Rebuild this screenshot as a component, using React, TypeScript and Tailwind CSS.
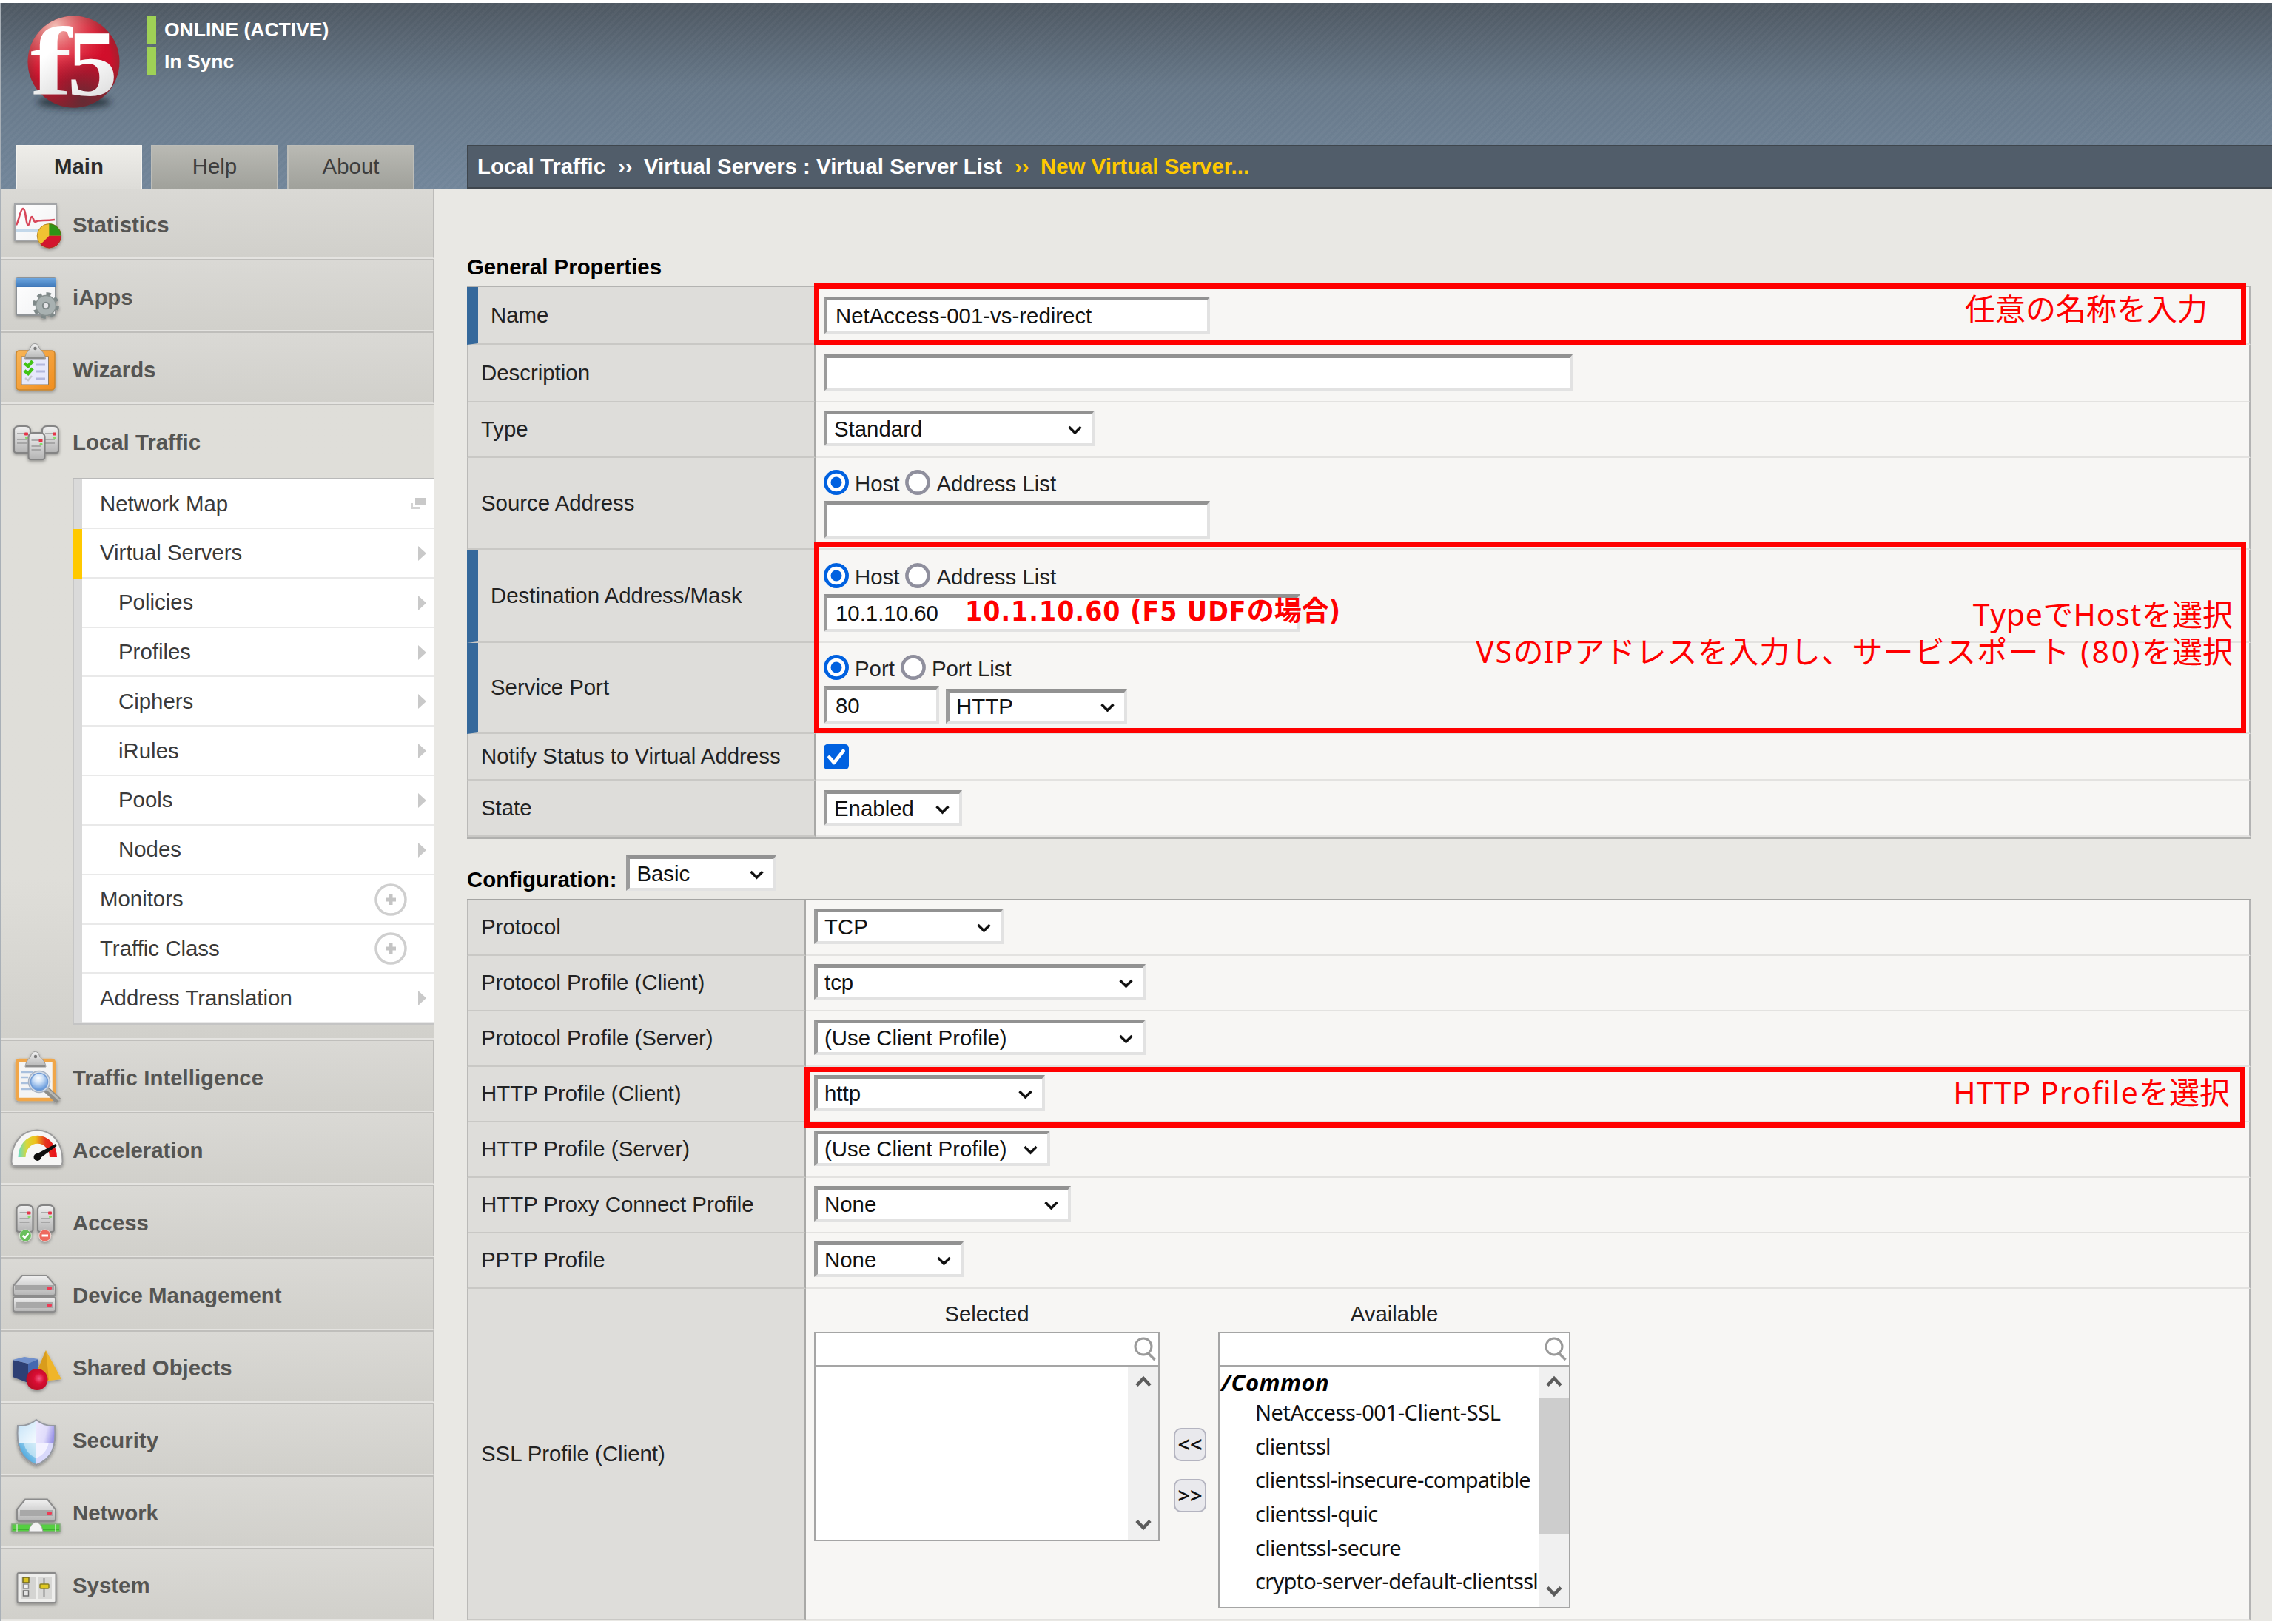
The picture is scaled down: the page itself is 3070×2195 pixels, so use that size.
import React from "react";

const metal = "url(#metal)";

function SharedDefs() {
  return (
    <svg className="absolute h-0 w-0" aria-hidden="true">
      <defs>
        <linearGradient id="metal" x1="0" y1="0" x2="0" y2="1">
          <stop offset="0" stopColor="#f1f1f1" />
          <stop offset="1" stopColor="#b4b4b4" />
        </linearGradient>
        <linearGradient id="paper" x1="0" y1="0" x2="1" y2="1">
          <stop offset="0" stopColor="#ffffff" />
          <stop offset="1" stopColor="#f0f1f3" />
        </linearGradient>
        <linearGradient id="orange" x1="0" y1="0" x2="1" y2="1">
          <stop offset="0" stopColor="#f7b558" />
          <stop offset="1" stopColor="#f18d1e" />
        </linearGradient>
        <linearGradient id="blueBar" x1="0" y1="0" x2="0" y2="1">
          <stop offset="0" stopColor="#6ba6e0" />
          <stop offset="1" stopColor="#3f77b8" />
        </linearGradient>
        <linearGradient id="gauge" x1="0" y1="0" x2="1" y2="0">
          <stop offset="0" stopColor="#5fdccb" />
          <stop offset="0.22" stopColor="#d8d83a" />
          <stop offset="0.45" stopColor="#eec01c" />
          <stop offset="0.7" stopColor="#e5341a" />
          <stop offset="1" stopColor="#ea0f1c" />
        </linearGradient>
        <radialGradient id="redBall" cx="0.6" cy="0.45" r="0.6">
          <stop offset="0" stopColor="#f35a86" />
          <stop offset="0.4" stopColor="#d90f33" />
          <stop offset="1" stopColor="#b80a26" />
        </radialGradient>
        <linearGradient id="shieldA" x1="0" y1="0" x2="1" y2="1">
          <stop offset="0" stopColor="#bfe0f7" />
          <stop offset="1" stopColor="#f6fbff" />
        </linearGradient>
        <linearGradient id="shieldB" x1="0" y1="0" x2="1" y2="0.3">
          <stop offset="0" stopColor="#eeeaff" />
          <stop offset="0.6" stopColor="#e0dcfb" />
          <stop offset="1" stopColor="#9a94e8" />
        </linearGradient>
        <linearGradient id="shieldC" x1="0" y1="1" x2="1" y2="0">
          <stop offset="0" stopColor="#1f84c9" />
          <stop offset="0.45" stopColor="#58aee0" />
          <stop offset="1" stopColor="#c8e6f7" />
        </linearGradient>
        <radialGradient id="lens" cx="0.45" cy="0.3" r="0.75">
          <stop offset="0" stopColor="#ffffff" />
          <stop offset="0.35" stopColor="#cfe2f8" />
          <stop offset="1" stopColor="#4f8ad6" />
        </radialGradient>
        <filter id="drop" x="-20%" y="-20%" width="140%" height="150%">
          <feDropShadow dx="0" dy="2" stdDeviation="2" floodColor="#000" floodOpacity="0.35" />
        </filter>
      </defs>
    </svg>
  );
}

function Icon({ children }: { children: React.ReactNode }) {
  return (
    <svg width="80" height="80" viewBox="0 0 80 80" className="shrink-0 overflow-visible">
      <g filter="url(#drop)">{children}</g>
    </svg>
  );
}

function StatisticsIcon() {
  return (
    <Icon>
      <rect x="12" y="15" width="56" height="49" fill="url(#paper)" stroke="#a3a5a8" strokeWidth="2" />
      <rect x="14" y="48" width="52" height="4" fill="#c3d8ea" />
      <path d="M14 43 C17 40 19 22 23 21 C27 21 27 43 30 43 C33 43 32 32 35 32 C37 32 37 39 40 39 C44 36 50 38 66 36" fill="none" stroke="#d8475a" strokeWidth="2.6" />
      <circle cx="58.4" cy="57.8" r="16.5" fill="#f1c232" />
      <path d="M58.4 57.8 V41.3 A16.5 16.5 0 0 1 74.9 57.8 Z" fill="#2f9416" />
      <path d="M58.4 57.8 H74.9 A16.5 16.5 0 0 1 46.7 69.5 Z" fill="#d3182e" />
      <circle cx="58.4" cy="57.8" r="16.2" fill="none" stroke="#7a4a20" strokeOpacity="0.5" strokeWidth="1" />
    </Icon>
  );
}

function IAppsIcon() {
  return (
    <Icon>
      <rect x="14" y="17" width="53" height="50" rx="2" fill="url(#paper)" stroke="#8f9396" strokeWidth="2" />
      <rect x="14" y="17" width="53" height="12" fill="url(#blueBar)" />
      <circle cx="54" cy="54" r="14.5" fill="none" stroke="#7f8989" strokeWidth="7" strokeDasharray="5.7 5.69" />
      <circle cx="54" cy="54" r="13.5" fill="#a8b1b1" stroke="#87908f" strokeWidth="1.5" />
      <circle cx="54" cy="54" r="4.2" fill="#e5e5e8" stroke="#7d8787" strokeWidth="2" />
    </Icon>
  );
}

function Clip({ x = 40 }: { x?: number }) {
  return (
    <g transform={`translate(${x - 40} 0)`}>
      <path d="M26 28 C27 18 33 17 34 12 C35 6 44 6 45 12 C46 17 53 18 54 28 Z" fill={metal} stroke="#9a9a9a" strokeWidth="1" />
      <rect x="27" y="25" width="26" height="3" fill="#8c8c8c" />
      <circle cx="40" cy="14" r="2.2" fill="#777" />
    </g>
  );
}

function WizardsIcon() {
  return (
    <Icon>
      <rect x="14" y="17" width="52" height="53" rx="4" fill="url(#orange)" stroke="#c9852c" strokeWidth="1.5" />
      <rect x="21" y="25" width="36.500" height="38" fill="#e6e8fb" stroke="#8f7a5c" strokeWidth="1" />
      <path d="M25 34 L30 38 L36 31" fill="none" stroke="#43c414" strokeWidth="4.500" />
      <path d="M25 44 L30 48 L36 41" fill="none" stroke="#43c414" strokeWidth="4.500" />
      <path d="M26 54 L30 57 L35 51" fill="none" stroke="#c5c6cf" strokeWidth="2.500" />
      <path d="M40 36 H53 M40 45 H53 M40 55 H53" stroke="#b3b8dd" strokeWidth="3" />
      <Clip x={39.5} />
    </Icon>
  );
}

function Tower({ x, y, h = 37 }: { x: number; y: number; h?: number }) {
  return (
    <g transform={`translate(${x} ${y})`}>
      <path d={`M1 ${h - 3} V6 Q2 1 8 1 H16 Q22 1 23 6 V${h - 3} Q23 ${h} 20 ${h} H4 Q1 ${h} 1 ${h - 3} Z`} fill={metal} stroke="#848484" strokeWidth="2.2" />
      <path d={`M5 11 H16 M5 19 H18 M5 24 H18`} stroke="#9b9b9b" strokeWidth="1.600" />
      <rect x="15" y="9.500" width="5" height="4" rx="1" fill="#e5344a" />
      <rect x="16" y="15" width="4" height="3" rx="1" fill="#86dc6a" />
    </g>
  );
}

function LocalTrafficIcon() {
  return (
    <Icon>
      <Tower x={10} y={20} />
      <Tower x={48} y={20} />
      <Tower x={29.5} y={29} />
    </Icon>
  );
}

function TrafficIntelligenceIcon() {
  return (
    <Icon>
      <rect x="15" y="19" width="50" height="53" rx="3" fill="#f4f4f4" stroke="#f0a648" strokeWidth="4.500" />
      <path d="M21 35 H36 M21 42 H30 M21 50 H30 M21 58 H34" stroke="#a9c0dd" strokeWidth="2.500" />
      <Clip />
      <path d="M54 58 L71 74" stroke="#8e8e8a" strokeWidth="9" />
      <path d="M55 57 L72 73" stroke="#b9b9b5" strokeWidth="3" />
      <circle cx="45" cy="48" r="14.500" fill="#d3dce8" stroke="#a6b2c3" strokeWidth="1.500" />
      <circle cx="45" cy="48" r="11.500" fill="url(#lens)" stroke="#6f9bd6" strokeWidth="1.500" />
    </Icon>
  );
}

function AccelerationIcon() {
  return (
    <Icon>
      <path d="M7.500 58 C7 32 22 15.500 42 15.500 C62 15.500 77 32 76.500 58 Q76.500 64 71 64 H13 Q7.500 64 7.500 58 Z" fill="#f6f6f5" stroke="#9c9c9c" strokeWidth="2" />
      <path d="M16.500 52 A26 29 0 0 1 69 52 H59 A16 18 0 0 0 26.500 52 Z" fill="url(#gauge)" />
      <path d="M39 49 L67 34 L68.500 37 L44 55 Z" fill="#111" />
      <circle cx="42.500" cy="52" r="5" fill="#111" />
    </Icon>
  );
}

function AccessIcon() {
  return (
    <Icon>
      <Tower x={13.5} y={18} />
      <Tower x={42} y={18} />
      <circle cx="26.400" cy="60" r="8" fill="#6abf5d" stroke="#d6e6d2" strokeWidth="1" />
      <path d="M22.500 60 L25.500 63 L30.500 57" fill="none" stroke="#fff" strokeWidth="2.500" />
      <circle cx="52.700" cy="60" r="8" fill="#ee6a5e" stroke="#efd6d2" strokeWidth="1" />
      <path d="M48.500 60 H57" stroke="#fff" strokeWidth="3" />
    </Icon>
  );
}

function DeviceIcon() {
  return (
    <Icon>
      <path d="M10 30 L22 16 H55 L67 30 V40 Q67 43 64 43 H13 Q10 43 10 40 Z" fill={metal} stroke="#8c8c8c" strokeWidth="2" />
      <path d="M12 29 H65 V36 H12 Z" fill="#a5a5a5" />
      <rect x="10" y="45" width="57" height="20" rx="3" fill={metal} stroke="#8c8c8c" strokeWidth="2" />
      <path d="M14 52 H63 V60 H14 Z" fill="#a8a8a8" />
      <rect x="55" y="31" width="7" height="4" rx="1.500" fill="#ee3a55" />
      <rect x="55" y="54" width="7" height="4" rx="1.500" fill="#ee3a55" />
    </Icon>
  );
}

function SharedObjectsIcon() {
  return (
    <Icon>
      <path d="M9 31 L30 36 V62 L9 54 Z" fill="#2d3f74" />
      <path d="M9 31 L25 27 L44 30 L30 36 Z" fill="#6f8fcb" />
      <path d="M30 36 L44 30 V56 L30 62 Z" fill="#4468b0" />
      <path d="M54 18 L75 57 L50 60 Z" fill="#efb52c" />
      <path d="M54 18 L42 46 L50 60 L58 58 Z" fill="#d99c1c" />
      <circle cx="42" cy="57.500" r="14.500" fill="url(#redBall)" />
    </Icon>
  );
}

function SecurityIcon() {
  const shield = "M41 14 Q52 23 66 22 C68 48 64 66 41 75 C18 66 14 48 16 22 Q30 23 41 14 Z";
  return (
    <Icon>
      <clipPath id="shieldClip">
        <path d={shield} />
      </clipPath>
      <g clipPath="url(#shieldClip)">
        <rect x="14" y="13" width="27" height="32" fill="url(#shieldA)" />
        <rect x="41" y="13" width="27" height="32" fill="url(#shieldB)" />
        <rect x="14" y="45" width="27" height="32" fill="url(#shieldC)" />
        <rect x="41" y="45" width="27" height="32" fill="#d9d9fb" />
        <path d="M41 45 H58 Q55 60 41 66 Z" fill="#f3f2ff" />
        <path d="M41 45 H24 Q27 60 41 66 Z" fill="#ddf1fa" fillOpacity="0.6" />
      </g>
      <path d={shield} fill="none" stroke="#9599a0" strokeWidth="2" />
    </Icon>
  );
}

function NetworkIcon() {
  return (
    <Icon>
      <path d="M15 37 L26 23.500 H56 L67 37 V50 Q67 53 64 53 H18 Q15 53 15 50 Z" fill={metal} stroke="#8c8c8c" strokeWidth="2" />
      <path d="M19 38 H63 V46 H19 Z" fill="#a8a8a8" />
      <rect x="55" y="40" width="7" height="4" rx="1.500" fill="#ee3a55" />
      <rect x="8" y="57" width="65" height="10" fill="#55cf42" stroke="#7fa878" strokeWidth="1.500" />
      <path d="M9 64 H72" stroke="#2f8f22" strokeWidth="2" strokeOpacity="0.5" />
      <path d="M15 57 V67 M67 57 V67" stroke="#cfe3ca" strokeWidth="1.500" />
      <path d="M31 67 Q33 55 41 55 Q48 55 50 67 Z" fill="#f3f3f3" stroke="#a0a0a0" strokeWidth="1" />
    </Icon>
  );
}

function SystemIcon() {
  return (
    <Icon>
      <rect x="15.500" y="25" width="52" height="40" rx="2" fill="#eeeeec" stroke="#8a8a8a" strokeWidth="2" />
      <rect x="21" y="30" width="20" height="30" fill="#d4d4d2" />
      <rect x="44" y="30" width="18" height="30" fill="#d8d8d6" />
      <rect x="23" y="31" width="8" height="7" fill="#d9c224" stroke="#6f6722" strokeWidth="1.500" />
      <rect x="23.500" y="40" width="7" height="6" fill="#f0f0f0" stroke="#909090" strokeWidth="1.500" />
      <rect x="23.500" y="49" width="7" height="7" fill="#e4e4e4" stroke="#707070" strokeWidth="1.500" />
      <path d="M51.500 32 V58" stroke="#8a8a8a" strokeWidth="2" />
      <rect x="46" y="40" width="12" height="6" rx="1" fill="#e0c922" stroke="#8b8122" strokeWidth="1.500" />
    </Icon>
  );
}

function Logo() {
  return (
    <svg width="140" height="140" viewBox="30 16 140 140" className="overflow-visible">
      <defs>
        <radialGradient id="ball" cx="0.5" cy="0.5" r="0.5">
          <stop offset="0" stopColor="#dc0a2c" />
          <stop offset="0.8" stopColor="#cf0f2b" />
          <stop offset="1" stopColor="#a51f2e" />
        </radialGradient>
        <radialGradient id="shine" cx="0.3" cy="0.12" r="0.6">
          <stop offset="0" stopColor="#f7cbc0" stopOpacity="0.95" />
          <stop offset="1" stopColor="#e84b50" stopOpacity="0" />
        </radialGradient>
        <radialGradient id="shade" cx="0.6" cy="0.9" r="0.5">
          <stop offset="0" stopColor="#4a3236" stopOpacity="0.8" />
          <stop offset="1" stopColor="#4a2a2e" stopOpacity="0" />
        </radialGradient>
        <linearGradient id="glyph" x1="0" y1="0" x2="0.3" y2="1">
          <stop offset="0.5" stopColor="#ffffff" />
          <stop offset="1" stopColor="#dcdcdc" />
        </linearGradient>
        <filter id="soft" x="-30%" y="-80%" width="160%" height="260%">
          <feGaussianBlur stdDeviation="5" />
        </filter>
      </defs>
      <ellipse cx="100" cy="138" rx="50" ry="9" fill="#1d252e" opacity="0.75" filter="url(#soft)" />
      <circle cx="99.500" cy="83.500" r="62" fill="url(#ball)" />
      <circle cx="99.500" cy="83.500" r="62" fill="url(#shine)" />
      <circle cx="99.500" cy="83.500" r="62" fill="url(#shade)" />
      <g fontFamily="'Liberation Serif', serif" fontWeight="700" fill="url(#glyph)">
        <text transform="translate(41 128) scale(1.28 1)" fontSize="131">f</text>
        <text transform="translate(91 128.500) scale(1.06 1)" fontSize="128">5</text>
      </g>
    </svg>
  );
}

function Tab({ label, active }: { label: string; active?: boolean }) {
  return (
    <div
      className={
        active
          ? "flex h-[59px] w-[171px] items-center justify-center border-x-2 border-t-2 border-[#f3f2ee] bg-linear-to-b from-[#eeede9] to-[#dddcd8] pb-[3px] font-bold text-[#2b2b2b]"
          : "flex h-[59px] w-[172px] items-center justify-center border-x-2 border-t-2 border-[#bdbdb8] bg-linear-to-b from-[#b9b9b3] to-[#a0a19b] pb-[3px] text-[#3d3d3d]"
      }
    >
      {label}
    </div>
  );
}

function NavRow({ label, icon, first, open }: { label: string; icon: React.ReactNode; first?: boolean; open?: boolean }) {
  return (
    <div
      className={
        open
          ? "flex h-[101px] items-start"
          : first
            ? "flex h-[95px] items-end border-r-2 border-b-2 border-r-[#bcbbb9] border-b-[#e4e3e0] bg-linear-to-b from-[#dad9d5] to-[#d1d0cb]"
            : "flex h-[98.100px] items-start border-t-2 border-r-2 border-b-2 border-t-[#bfbebb] border-r-[#bcbbb9] border-b-[#e4e3e0] bg-linear-to-b from-[#dad9d5] to-[#d1d0cb]"
      }
    >
      <div className="flex h-[94px] items-center gap-[10px] pl-2">
        {icon}
        <span className="pt-[5px] font-bold text-[#555553]">{label}</span>
      </div>
    </div>
  );
}

type SubKind = "arrow" | "plus" | "window";

function SubRow({ label, indent, kind, current }: { label: string; indent?: boolean; kind: SubKind; current?: boolean }) {
  return (
    <div className="flex h-[66.820px]">
      <div className={current ? "w-[13px] bg-[#ffc900]" : "w-[13px] border-l-2 border-[#c6c6c6] bg-[#dadada]"} />
      <div className="flex flex-1 items-center justify-between border-b-2 border-[#e9e9e9] bg-white pr-[11px]">
        <span className={indent ? "pl-[49px]" : "pl-[24px]"}>{label}</span>
        {kind === "arrow" && (
          <svg width="11" height="20" viewBox="0 0 11 20" className="mt-px">
            <path d="M0 0 L11 10 L0 20 Z" fill="#c9c9c9" />
          </svg>
        )}
        {kind === "plus" && (
          <svg width="44" height="44" viewBox="0 0 44 44" className="mt-px mr-[26px]">
            <circle cx="22" cy="22" r="20" fill="none" stroke="#cfcfcf" strokeWidth="3.500" />
            <path d="M22 15 V29 M15 22 H29" stroke="#c4c4c4" strokeWidth="5" />
          </svg>
        )}
        {kind === "window" && (
          <svg width="21" height="18" viewBox="0 0 21 18" className="mt-px">
            <path d="M1.500 8 V14.500 H13" fill="none" stroke="#d3d3d3" strokeWidth="3" />
            <rect x="6" y="1" width="15" height="10" fill="#c9c9c9" />
          </svg>
        )}
      </div>
    </div>
  );
}

const field =
  "flex items-center border-t-[5px] border-l-[5px] border-r-[4px] border-b-[4px] border-t-[#929292] border-l-[#9b9b9b] border-r-[#e2e2e2] border-b-[#e2e2e2] bg-white text-[#111]";

function Field({ size, value }: { size: string; value?: string }) {
  return <div className={`${field} pl-[11px] ${size}`}>{value}</div>;
}

function Select({ size, value }: { size: string; value: string }) {
  return (
    <div className={`${field} justify-between pl-[9px] pr-[13px] ${size}`}>
      <span className="whitespace-nowrap">{value}</span>
      <svg width="19" height="13" viewBox="0 0 19 13" className="mt-[3px]">
        <path d="M1.500 2 L9.500 10 L17.500 2" fill="none" stroke="#111" strokeWidth="3.400" />
      </svg>
    </div>
  );
}

function Radio({ on }: { on?: boolean }) {
  return (
    <svg width="34" height="34" viewBox="0 0 34 34" className="shrink-0">
      {on ? (
        <>
          <circle cx="17" cy="17" r="14.600" fill="#fff" stroke="#0061e0" strokeWidth="4.800" />
          <circle cx="17" cy="17" r="7.500" fill="#0061e0" />
        </>
      ) : (
        <circle cx="17" cy="17" r="14.600" fill="#fff" stroke="#8f8f9d" strokeWidth="4.600" />
      )}
    </svg>
  );
}

function RadioPair({ a, b }: { a: string; b: string }) {
  return (
    <div className="flex h-[34px] items-center">
      <Radio on />
      <span className="mt-[3px] ml-[8px]">{a}</span>
      <span className="ml-[8px] flex">
        <Radio />
      </span>
      <span className="mt-[3px] ml-[8px]">{b}</span>
    </div>
  );
}

function Row({ label, height, labelWidth, required, children }: { label: string; height: string; labelWidth: string; required?: boolean; children?: React.ReactNode }) {
  return (
    <div className={`flex ${height}`}>
      <div
        className={
          required
            ? `flex items-center border-r-2 border-b-2 border-l-[15px] border-r-[#a9a9a7] border-b-[#c9c8c5] border-l-[#35689b] bg-[#dedddA] pl-[17px] text-[#222] ${labelWidth}`
            : `flex items-center border-r-2 border-b-2 border-l-2 border-r-[#a9a9a7] border-b-[#c9c8c5] border-l-[#bab9b7] bg-[#dedddA] pl-[17px] text-[#222] ${labelWidth}`
        }
      >
        <span className="pb-[1px]">{label}</span>
      </div>
      <div className="flex-1 border-r-2 border-b-2 border-r-[#b3b3b3] border-b-[#e3e2e0] bg-[#f7f6f4] pl-[11px]">{children}</div>
    </div>
  );
}

function SearchIcon() {
  return (
    <svg width="30" height="33" viewBox="0 0 30 33">
      <circle cx="13" cy="13" r="11" fill="none" stroke="#9a9a9a" strokeWidth="3" />
      <path d="M19.500 22 L28.500 31" stroke="#9a9a9a" strokeWidth="3.500" />
    </svg>
  );
}

function ScrollArrow({ down }: { down?: boolean }) {
  return (
    <svg width="22" height="16" viewBox="0 0 22 16">
      <path d={down ? "M2 2.500 L11 12 L20 2.500" : "M2 13.500 L11 4 L20 13.500"} fill="none" stroke="#5c5c5c" strokeWidth="4.500" />
    </svg>
  );
}

const options: { name: string; spacing: string }[] = [
  { name: "NetAccess-001-Client-SSL", spacing: "tracking-[-0.450px]" },
  { name: "clientssl", spacing: "tracking-[-0.800px]" },
  { name: "clientssl-insecure-compatible", spacing: "tracking-[-0.800px]" },
  { name: "clientssl-quic", spacing: "tracking-[-0.700px]" },
  { name: "clientssl-secure", spacing: "tracking-[-0.700px]" },
  { name: "crypto-server-default-clientssl", spacing: "tracking-[-0.740px]" },
];

function MoveButton({ label }: { label: string }) {
  return (
    <div className="flex h-[45px] w-[44px] items-center justify-center rounded-[10px] border-2 border-[#b4b4c0] bg-[#e9e9ed] pb-[2px] font-['Noto_Sans',sans-serif] text-[29px] font-semibold text-[#111]">
      {label}
    </div>
  );
}

function SslPicker() {
  return (
    <div className="flex items-start pt-[15px]">
      <div className="flex w-[467px] flex-col items-center">
        <div className="h-[43px] leading-[38px]">Selected</div>
        <div className="flex h-[47px] w-full items-center justify-end border-2 border-[#a5a5a5] bg-white pr-[3px]">
          <SearchIcon />
        </div>
        <div className="flex h-[236px] w-full justify-end border-2 border-t-0 border-[#a5a5a5] bg-white">
          <div className="flex w-[41px] flex-col items-center justify-between bg-[#f0f0f0] py-[12px]">
            <ScrollArrow />
            <ScrollArrow down />
          </div>
        </div>
      </div>
      <div className="mt-[173px] ml-[19px] flex flex-col gap-[24px]">
        <MoveButton label="<<" />
        <MoveButton label=">>" />
      </div>
      <div className="ml-[16px] flex w-[476px] flex-col items-center">
        <div className="h-[43px] leading-[38px]">Available</div>
        <div className="flex h-[47px] w-full items-center justify-end border-2 border-[#a5a5a5] bg-white pr-[3px]">
          <SearchIcon />
        </div>
        <div className="flex h-[327px] w-full justify-between border-2 border-t-0 border-[#a5a5a5] bg-white">
          <div className="w-[431px] overflow-hidden font-['Noto_Sans',sans-serif] text-[29px] leading-[45.700px] whitespace-nowrap text-[#111]">
            <div className="h-[39px] pl-[2px] text-[31px] leading-[42px] font-bold tracking-[0.400px] text-black italic">/Common</div>
            {options.map((o) => (
              <div key={o.name} className={`h-[45.700px] pl-[48px] ${o.spacing}`}>
                {o.name}
              </div>
            ))}
          </div>
          <div className="flex w-[41px] flex-col items-center bg-[#f0f0f0] pt-[12px] pb-[13px]">
            <ScrollArrow />
            <div className="mt-[14px] h-[184px] w-full bg-[#cdcdcd]" />
            <div className="flex-1" />
            <ScrollArrow down />
          </div>
        </div>
      </div>
    </div>
  );
}

const red = "text-[#ff0000] whitespace-nowrap [font-kerning:none] [text-spacing-trim:space-all]";

const redSans = "font-['Noto_Sans','Noto_Sans_CJK_JP',sans-serif]";

const subItems: { label: string; indent?: boolean; kind: SubKind; current?: boolean }[] = [
  { label: "Network Map", kind: "window" },
  { label: "Virtual Servers", kind: "arrow", current: true },
  { label: "Policies", kind: "arrow", indent: true },
  { label: "Profiles", kind: "arrow", indent: true },
  { label: "Ciphers", kind: "arrow", indent: true },
  { label: "iRules", kind: "arrow", indent: true },
  { label: "Pools", kind: "arrow", indent: true },
  { label: "Nodes", kind: "arrow", indent: true },
  { label: "Monitors", kind: "plus" },
  { label: "Traffic Class", kind: "plus" },
  { label: "Address Translation", kind: "arrow" },
];

function Sidebar() {
  return (
    <nav className="w-[587px] shrink-0">
      <NavRow first label="Statistics" icon={<StatisticsIcon />} />
      <NavRow label="iApps" icon={<IAppsIcon />} />
      <NavRow label="Wizards" icon={<WizardsIcon />} />
      <div className="h-[859px] border-t-2 border-b-2 border-t-[#bfbebb] border-b-[#e4e3e0] bg-linear-to-b from-[#dfded9] from-75% to-[#d1d0cb]">
        <NavRow open label="Local Traffic" icon={<LocalTrafficIcon />} />
        <div className="-mt-[3px] ml-[98px] border-t-2 border-b-2 border-t-[#b9b9b9] border-b-[#c4c4c4] text-[#3a3a3a]">
          {subItems.map((s) => (
            <SubRow key={s.label} {...s} />
          ))}
        </div>
      </div>
      <NavRow label="Traffic Intelligence" icon={<TrafficIntelligenceIcon />} />
      <NavRow label="Acceleration" icon={<AccelerationIcon />} />
      <NavRow label="Access" icon={<AccessIcon />} />
      <NavRow label="Device Management" icon={<DeviceIcon />} />
      <NavRow label="Shared Objects" icon={<SharedObjectsIcon />} />
      <NavRow label="Security" icon={<SecurityIcon />} />
      <NavRow label="Network" icon={<NetworkIcon />} />
      <NavRow label="System" icon={<SystemIcon />} />
    </nav>
  );
}

function Header() {
  return (
    <header className="flex h-[251px] flex-col justify-between bg-[repeating-linear-gradient(135deg,rgba(255,255,255,0.028)_0px,rgba(255,255,255,0.028)_3.500px,transparent_3.500px,transparent_7px),linear-gradient(to_bottom,#4e5862,#677889_45%,#72869a)]">
      <div className="flex items-start pt-[12px] pl-[30px]">
        <Logo />
        <div className="mt-[6px] ml-[29px] flex flex-col gap-[5px] text-[26.500px] font-bold text-white">
          <div className="flex h-[37px] items-center border-l-[12px] border-[#9fd156] pb-[1px] pl-[11px]">ONLINE (ACTIVE)</div>
          <div className="flex h-[37px] items-center border-l-[12px] border-[#9fd156] pl-[11px]">In Sync</div>
        </div>
      </div>
      <div className="flex items-end">
        <div className="flex w-[631px] gap-[12px] pl-[21px]">
          <Tab label="Main" active />
          <Tab label="Help" />
          <Tab label="About" />
        </div>
        <div className="flex h-[59px] flex-1 items-center border-t-2 border-b-2 border-l-2 border-[#3f464d] bg-[#4e5965]/90 pb-[1px] pl-[12px] font-bold text-white">
          <span className="w-[190px]">Local Traffic</span>
          <span className="w-[35px]">››</span>
          <span className="w-[501px] whitespace-nowrap">Virtual Servers : Virtual Server List</span>
          <span className="w-[35px] text-[#ffc900]">››</span>
          <span className="text-[#ffc900]">New Virtual Server...</span>
        </div>
      </div>
    </header>
  );
}

export default function App() {
  return (
    <div className="h-[2195px] w-[3070px] overflow-hidden bg-white pt-[4px] font-['Liberation_Sans',Arial,sans-serif] text-[29.400px] leading-[34px] text-[#222]">
      <SharedDefs />
      <div className="h-[2187px] overflow-hidden border-l border-[#a9b0b7] bg-[#e9e8e4]">
        <div className="-ml-px">
          <Header />
          <div className="flex">
            <Sidebar />
            <main className="w-[2410px] pl-[44px]">
              <h2 className="flex h-[131px] items-end pb-[8px] font-bold text-black">General Properties</h2>
              <section className="relative w-[2410px] border-t-2 border-b-[3px] border-t-[#b3b3b1] border-b-[#b0b0ae]">
                <Row label="Name" required height="h-[78px]" labelWidth="w-[471px]">
                  <div className="pt-[13px]">
                    <Field size="h-[51px] w-[522px]" value="NetAccess-001-vs-redirect" />
                  </div>
                </Row>
                <Row label="Description" height="h-[78px]" labelWidth="w-[471px]">
                  <div className="pt-[13px]">
                    <Field size="h-[50px] w-[1012px]" />
                  </div>
                </Row>
                <Row label="Type" height="h-[75px]" labelWidth="w-[471px]">
                  <div className="pt-[11px]">
                    <Select size="h-[48px] w-[366px]" value="Standard" />
                  </div>
                </Row>
                <Row label="Source Address" height="h-[124px]" labelWidth="w-[471px]">
                  <div className="flex flex-col gap-[8px] pt-[16px]">
                    <RadioPair a="Host" b="Address List" />
                    <Field size="h-[51px] w-[522px]" />
                  </div>
                </Row>
                <Row label="Destination Address/Mask" required height="h-[126px]" labelWidth="w-[471px]">
                  <div className="flex flex-col gap-[8px] pt-[18px]">
                    <RadioPair a="Host" b="Address List" />
                    <Field size="h-[51px] w-[644px]" value="10.1.10.60" />
                  </div>
                </Row>
                <Row label="Service Port" required height="h-[123px]" labelWidth="w-[471px]">
                  <div className="flex flex-col gap-[8px] pt-[16px]">
                    <RadioPair a="Port" b="Port List" />
                    <div className="flex items-end gap-[9px]">
                      <Field size="h-[51px] w-[156px] pt-[1px]" value="80" />
                      <Select size="h-[47px] w-[245px]" value="HTTP" />
                    </div>
                  </div>
                </Row>
                <Row label="Notify Status to Virtual Address" height="h-[63px]" labelWidth="w-[471px]">
                  <div className="pt-[14px]">
                    <svg width="34" height="34" viewBox="0 0 34 34">
                      <rect width="34" height="34" rx="5" fill="#0061e0" />
                      <path d="M7.500 17.500 L14 25 L26.500 9" fill="none" stroke="#fff" strokeWidth="4.600" strokeLinecap="round" strokeLinejoin="round" />
                    </svg>
                  </div>
                </Row>
                <Row label="State" height="h-[76px]" labelWidth="w-[471px]">
                  <div className="pt-[13px]">
                    <Select size="h-[48px] w-[187px]" value="Enabled" />
                  </div>
                </Row>
                <div className={`absolute top-[-5px] left-[469px] flex h-[83px] w-[1935px] justify-end border-[7px] border-[#ff0000] pr-[45px] text-[41px] leading-[54px] ${red} ${redSans}`}>
                  <span>任意の名称を入力</span>
                </div>
                <div className={`absolute top-[344px] left-[469px] flex h-[259px] w-[1935px] flex-col items-end border-[7px] border-[#ff0000] pt-[67px] pr-[11px] text-[41px] leading-[49.500px] ${red} ${redSans}`}>
                  <div>
                    <span className="tracking-[0.700px]">Type</span>で<span className="tracking-[0.700px]">Host</span>を選択
                  </div>
                  <div>
                    <span className="tracking-[1.500px]">VS</span>の<span className="tracking-[1.500px]">IP</span>
                    <span className="tracking-[0.700px]">アドレスを入力し、</span>
                    <span className="tracking-[1.200px]">サービスポート</span>
                    <span className="tracking-[2.800px]"> (80)</span>を選択
                  </div>
                </div>
                <div className={`absolute top-[411px] left-[673px] font-['DejaVu_Sans_Condensed','DejaVu_Sans','Noto_Sans_CJK_JP',sans-serif] text-[37px] leading-[56px] font-bold [font-stretch:condensed] ${red}`}>
                  <span className="tracking-[1.050px]">10.1.10.60 (F5 UDF</span>の場合)
                </div>
              </section>
              <div className="flex h-[81px] items-start gap-[13px] pt-[22px]">
                <h2 className="mt-[16px] font-bold text-black">Configuration:</h2>
                <Select size="h-[48px] w-[203px]" value="Basic" />
              </div>
              <section className="relative w-[2410px] border-t-2 border-t-[#a5a5a3]">
                <Row label="Protocol" height="h-[75px]" labelWidth="w-[458px]">
                  <div className="pt-[11px]">
                    <Select size="h-[48px] w-[256px]" value="TCP" />
                  </div>
                </Row>
                <Row label="Protocol Profile (Client)" height="h-[75px]" labelWidth="w-[458px]">
                  <div className="pt-[11px]">
                    <Select size="h-[48px] w-[448px]" value="tcp" />
                  </div>
                </Row>
                <Row label="Protocol Profile (Server)" height="h-[75px]" labelWidth="w-[458px]">
                  <div className="pt-[11px]">
                    <Select size="h-[48px] w-[448px]" value="(Use Client Profile)" />
                  </div>
                </Row>
                <Row label="HTTP Profile (Client)" height="h-[75px]" labelWidth="w-[458px]">
                  <div className="pt-[11px]">
                    <Select size="h-[48px] w-[312px]" value="http" />
                  </div>
                </Row>
                <Row label="HTTP Profile (Server)" height="h-[75px]" labelWidth="w-[458px]">
                  <div className="pt-[11px]">
                    <Select size="h-[48px] w-[319px]" value="(Use Client Profile)" />
                  </div>
                </Row>
                <Row label="HTTP Proxy Connect Profile" height="h-[75px]" labelWidth="w-[458px]">
                  <div className="pt-[11px]">
                    <Select size="h-[48px] w-[347px]" value="None" />
                  </div>
                </Row>
                <Row label="PPTP Profile" height="h-[75px]" labelWidth="w-[458px]">
                  <div className="pt-[11px]">
                    <Select size="h-[48px] w-[202px]" value="None" />
                  </div>
                </Row>
                <Row label="SSL Profile (Client)" height="h-[448px]" labelWidth="w-[458px]">
                  <SslPicker />
                </Row>
                <div className={`absolute top-[225px] left-[456px] flex h-[82px] w-[1947px] justify-end border-[7px] border-[#ff0000] pr-[14px] text-[41px] leading-[54px] ${red} ${redSans}`}>
                  <span>
                    <span className="tracking-[1.200px]">HTTP Profile</span>を選択
                  </span>
                </div>
              </section>
            </main>
          </div>
        </div>
      </div>
    </div>
  );
}
